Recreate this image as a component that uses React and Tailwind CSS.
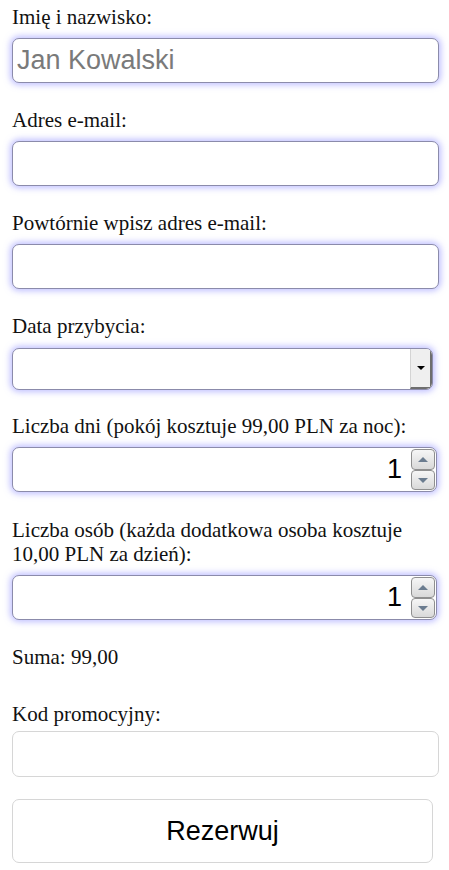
const serif = { fontFamily: '"Liberation Serif", "Times New Roman", serif' };

function Label({ children }) {
  return (
    <label className="block text-[21px] leading-[24px] text-[#111]" style={serif}>
      {children}
    </label>
  );
}

const glow = 'rounded-[7px] border border-[#8b8bab] bg-white shadow-[0_0_6px_2px_rgba(140,140,255,0.55)]';

function TextField({ placeholder }) {
  return (
    <input
      type="text"
      placeholder={placeholder}
      className={`mt-[9px] block h-[45px] w-full px-[4px] text-[27px] text-black outline-none placeholder:text-[#7a7a7a] ${glow}`}
      style={{ fontFamily: '"Liberation Sans", Arial, sans-serif' }}
    />
  );
}

function Spinner() {
  return (
    <div className="flex h-full flex-col justify-between py-[1px]">
      <div className="flex h-[21px] w-[24px] items-center justify-center rounded-[4px] border border-[#8f8f8f] bg-gradient-to-b from-[#f6f6f6] to-[#d9d9d9]">
        <span className="h-0 w-0 border-x-[5px] border-b-[5px] border-x-transparent border-b-[#6b7c8f]" />
      </div>
      <div className="flex h-[20px] w-[24px] items-center justify-center rounded-[4px] border border-[#8f8f8f] bg-gradient-to-b from-[#f6f6f6] to-[#d9d9d9]">
        <span className="h-0 w-0 border-x-[5px] border-t-[5px] border-x-transparent border-t-[#6b7c8f]" />
      </div>
    </div>
  );
}

function NumberField({ value }) {
  return (
    <div className={`mt-[9px] mr-[2px] flex h-[45px] items-center justify-end gap-[9px] pr-[1px] ${glow}`}>
      <span className="text-[27px] leading-none text-black" style={{ fontFamily: '"Liberation Sans", Arial, sans-serif' }}>
        {value}
      </span>
      <Spinner />
    </div>
  );
}

function SelectField() {
  return (
    <div className={`mt-[10px] mr-[6px] flex h-[42px] items-stretch justify-end overflow-hidden ${glow}`}>
      <div className="flex w-[22px] items-center justify-center border-l border-[#d4d4d4] border-r-2 border-b-2 border-r-[#6e6e6e] border-b-[#6e6e6e] bg-[#efefef]">
        <span className="h-0 w-0 border-x-[4px] border-t-[4px] border-x-transparent border-t-black" />
      </div>
    </div>
  );
}

export default function App() {
  return (
    <div className="min-h-screen bg-white pt-[5px] pl-[12px] pr-[10px]">
      <Label>Imię i nazwisko:</Label>
      <TextField placeholder="Jan Kowalski" />

      <div className="mt-[25px]">
        <Label>Adres e-mail:</Label>
        <TextField />
      </div>

      <div className="mt-[25px]">
        <Label>Powtórnie wpisz adres e-mail:</Label>
        <TextField />
      </div>

      <div className="mt-[25px]">
        <Label>Data przybycia:</Label>
        <SelectField />
      </div>

      <div className="mt-[24px]">
        <Label>Liczba dni (pokój kosztuje 99,00 PLN za noc):</Label>
        <NumberField value="1" />
      </div>

      <div className="mt-[26px]">
        <Label>
          Liczba osób (każda dodatkowa osoba kosztuje<br />10,00 PLN za dzień):
        </Label>
        <NumberField value="1" />
      </div>

      <p className="mt-[25px] text-[21px] leading-[24px] text-[#111]" style={serif}>
        Suma: 99,00
      </p>

      <div className="mt-[33px]">
        <Label>Kod promocyjny:</Label>
        <input
          type="text"
          className="mt-[5px] block h-[46px] w-full rounded-[7px] border border-[#d6d6d6] bg-white px-[4px] text-[27px] outline-none"
          style={{ fontFamily: '"Liberation Sans", Arial, sans-serif' }}
        />
      </div>

      <button
        type="button"
        className="mt-[22px] mr-[6px] flex h-[64px] w-[421px] items-center justify-center rounded-[7px] border border-[#d6d6d6] bg-white text-[27px] text-black"
        style={{ fontFamily: '"Liberation Sans", Arial, sans-serif' }}
      >
        Rezerwuj
      </button>
    </div>
  );
}
